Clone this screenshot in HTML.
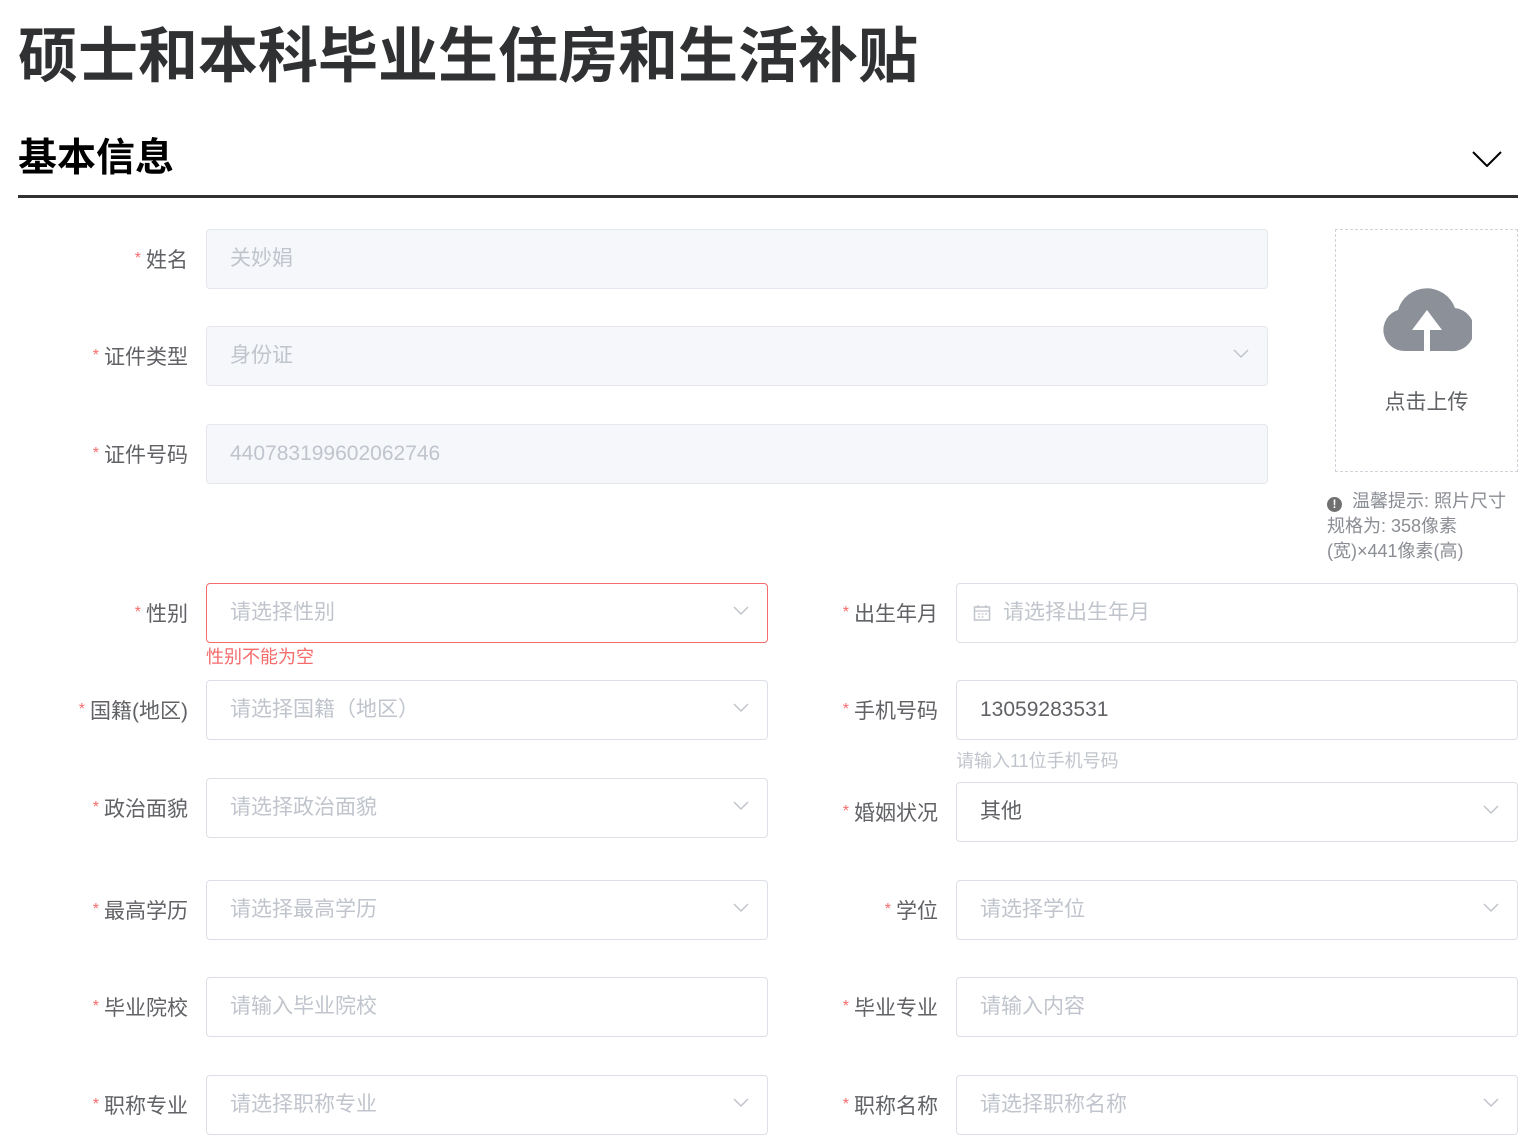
<!DOCTYPE html>
<html><head><meta charset="utf-8"><style>
*{margin:0;padding:0;box-sizing:border-box}
body{width:1539px;height:1124px;overflow:hidden;background:#fff;position:relative;font-family:"Liberation Sans","Noto Sans CJK SC",sans-serif;color:#606266}
.a{position:absolute}
.t1{left:18px;top:17px;font-size:60px;font-weight:bold;color:#303133;line-height:80px;letter-spacing:0}
.t2{left:18px;top:133px;font-size:39px;font-weight:bold;color:#000;line-height:52px}
.line{left:18px;top:195px;width:1500px;height:3px;background:#303133}
.lab{font-size:21px;line-height:60px;text-align:right;width:180px;color:#606266;white-space:nowrap}
.lab b{color:#f56c6c;font-weight:normal;font-size:16px;vertical-align:4px;margin-right:5px}
.in{height:60px;border:1px solid #dcdfe6;border-radius:4px;font-size:21px;line-height:58px;padding-left:23px;color:#c0c4cc;background:#fff}
.dis{background:#f5f7fa;border-color:#e4e7ed}
.val{color:#606266}
.err{border-color:#f56c6c}
.chev{position:absolute;right:18px;top:22px;width:16px;height:10px}
.small{font-size:18px;line-height:25px}
</style></head><body>
<div class="a t1">硕士和本科毕业生住房和生活补贴</div>
<div class="a t2">基本信息</div>
<svg class="a" style="left:1472px;top:151px" width="30" height="16"><path d="M1 1 L15 15 L29 1" fill="none" stroke="#000" stroke-width="2"/></svg>
<div class="a line"></div>

<div class="a lab" style="left:8px;top:229px"><b>*</b>姓名</div>
<div class="a in dis" style="left:206px;top:229px;width:1062px">关妙娟</div>
<div class="a lab" style="left:8px;top:326px"><b>*</b>证件类型</div>
<div class="a in dis" style="left:206px;top:326px;width:1062px">身份证<svg class="chev" viewBox="0 0 16 10"><path d="M1 1 L8 8 L15 1" fill="none" stroke="#c0c4cc" stroke-width="1.5"/></svg></div>
<div class="a lab" style="left:8px;top:424px"><b>*</b>证件号码</div>
<div class="a in dis" style="left:206px;top:424px;width:1062px">440783199602062746</div>

<div class="a" style="left:1335px;top:229px;width:183px;height:243px;border:1px dashed #d0d3d9"></div>
<svg class="a" style="left:1382px;top:284px" width="90" height="68" viewBox="0 0 90 68">
<path d="M22 67 A21 21 0 0 1 16 26 A30 30 0 0 1 73 24 A21 21 0 0 1 68 67 Z" fill="#8c9099"/>
<path d="M45 26 L30 46 L42 46 L42 67 L48 67 L48 46 L60 46 Z" fill="#fff"/>
</svg>
<div class="a" style="left:1335px;top:388px;width:183px;text-align:center;font-size:21px;color:#606266;line-height:30px">点击上传</div>
<div class="a small" style="left:1327px;top:489px;width:200px;color:#8a8d93">
<span style="display:inline-block;width:15px;height:15px;border-radius:50%;background:#707070;color:#fff;font-size:12px;line-height:15px;text-align:center;font-weight:bold;vertical-align:-1px;margin-right:10px">!</span>温馨提示: 照片尺寸<br>规格为: 358像素<br>(宽)×441像素(高)</div>

<div class="a lab" style="left:8px;top:583px"><b>*</b>性别</div>
<div class="a in err" style="left:206px;top:583px;width:562px">请选择性别<svg class="chev" viewBox="0 0 16 10"><path d="M1 1 L8 8 L15 1" fill="none" stroke="#c0c4cc" stroke-width="1.5"/></svg></div>
<div class="a" style="left:206px;top:645px;font-size:18px;color:#f56c6c;line-height:25px">性别不能为空</div>
<div class="a lab" style="left:758px;top:583px"><b>*</b>出生年月</div>
<div class="a in" style="left:956px;top:583px;width:562px;padding-left:46px">请选择出生年月
<svg class="a" style="left:16px;top:20px" width="18" height="18" viewBox="0 0 18 18"><rect x="1.5" y="3" width="15" height="13" fill="none" stroke="#c0c4cc" stroke-width="1.5"/><path d="M1.5 7 H16.5 M5 1 V4 M13 1 V4 M5 10 H7 M8.5 10 H10.5 M12 10 H14 M5 13 H7 M8.5 13 H10.5" stroke="#c0c4cc" stroke-width="1.3"/></svg></div>

<div class="a lab" style="left:8px;top:680px"><b>*</b>国籍(地区)</div>
<div class="a in" style="left:206px;top:680px;width:562px">请选择国籍（地区）<svg class="chev" viewBox="0 0 16 10"><path d="M1 1 L8 8 L15 1" fill="none" stroke="#c0c4cc" stroke-width="1.5"/></svg></div>
<div class="a lab" style="left:758px;top:680px"><b>*</b>手机号码</div>
<div class="a in val" style="left:956px;top:680px;width:562px">13059283531</div>
<div class="a" style="left:956px;top:749px;font-size:18px;color:#c0c4cc;line-height:25px">请输入11位手机号码</div>

<div class="a lab" style="left:8px;top:778px"><b>*</b>政治面貌</div>
<div class="a in" style="left:206px;top:778px;width:562px">请选择政治面貌<svg class="chev" viewBox="0 0 16 10"><path d="M1 1 L8 8 L15 1" fill="none" stroke="#c0c4cc" stroke-width="1.5"/></svg></div>
<div class="a lab" style="left:758px;top:782px"><b>*</b>婚姻状况</div>
<div class="a in val" style="left:956px;top:782px;width:562px">其他<svg class="chev" viewBox="0 0 16 10"><path d="M1 1 L8 8 L15 1" fill="none" stroke="#c0c4cc" stroke-width="1.5"/></svg></div>

<div class="a lab" style="left:8px;top:880px"><b>*</b>最高学历</div>
<div class="a in" style="left:206px;top:880px;width:562px">请选择最高学历<svg class="chev" viewBox="0 0 16 10"><path d="M1 1 L8 8 L15 1" fill="none" stroke="#c0c4cc" stroke-width="1.5"/></svg></div>
<div class="a lab" style="left:758px;top:880px"><b>*</b>学位</div>
<div class="a in" style="left:956px;top:880px;width:562px">请选择学位<svg class="chev" viewBox="0 0 16 10"><path d="M1 1 L8 8 L15 1" fill="none" stroke="#c0c4cc" stroke-width="1.5"/></svg></div>

<div class="a lab" style="left:8px;top:977px"><b>*</b>毕业院校</div>
<div class="a in" style="left:206px;top:977px;width:562px">请输入毕业院校</div>
<div class="a lab" style="left:758px;top:977px"><b>*</b>毕业专业</div>
<div class="a in" style="left:956px;top:977px;width:562px">请输入内容</div>

<div class="a lab" style="left:8px;top:1075px"><b>*</b>职称专业</div>
<div class="a in" style="left:206px;top:1075px;width:562px">请选择职称专业<svg class="chev" viewBox="0 0 16 10"><path d="M1 1 L8 8 L15 1" fill="none" stroke="#c0c4cc" stroke-width="1.5"/></svg></div>
<div class="a lab" style="left:758px;top:1075px"><b>*</b>职称名称</div>
<div class="a in" style="left:956px;top:1075px;width:562px">请选择职称名称<svg class="chev" viewBox="0 0 16 10"><path d="M1 1 L8 8 L15 1" fill="none" stroke="#c0c4cc" stroke-width="1.5"/></svg></div>
</body></html>
